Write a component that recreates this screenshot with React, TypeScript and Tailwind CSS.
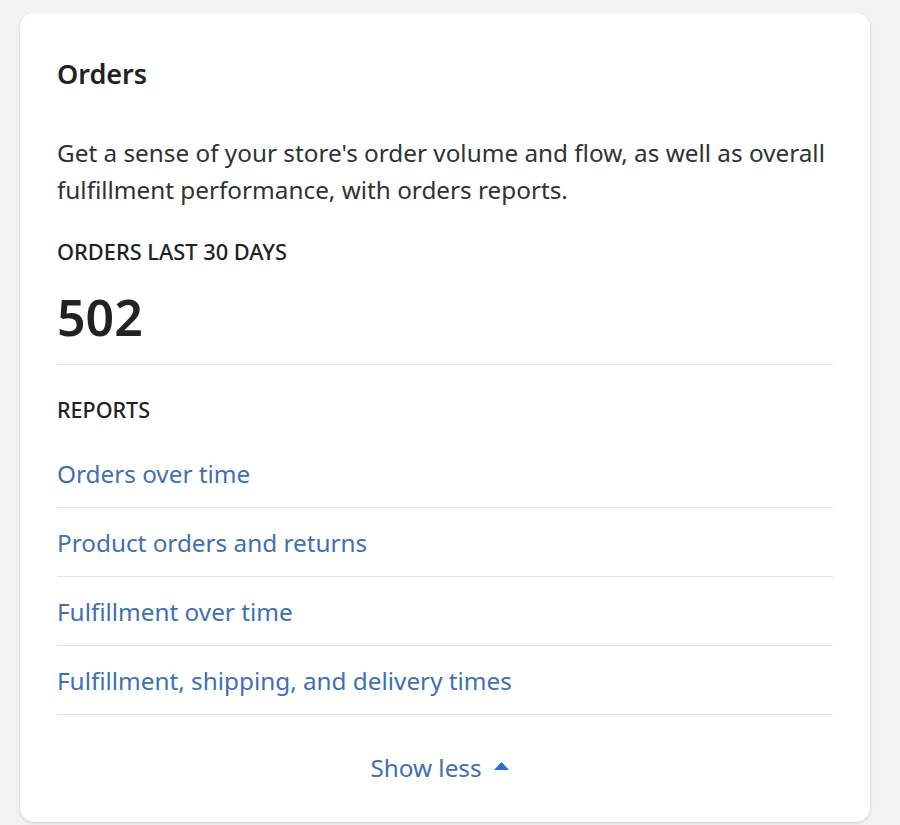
import React from "react";

const links = [
  "Orders over time",
  "Product orders and returns",
  "Fulfillment over time",
  "Fulfillment, shipping, and delivery times",
];

export default function App() {
  return (
    <div
      className="w-[900px] h-[825px] bg-[#f3f3f3] pt-[13px] pl-[20px] overflow-hidden"
      style={{ fontFamily: '"Noto Sans", "Open Sans", sans-serif' }}
    >
      <div className="w-[850px] h-[809px] bg-white rounded-[14px] shadow-[0_1px_3px_rgba(0,0,0,0.18)] px-[37px] pt-[45px] flex flex-col">
        <h2 className="text-[27px] leading-[32px] font-semibold text-[#202223]">Orders</h2>
        <p className="mt-[44px] text-[24.3px] leading-[37px] text-[#303233]">
          Get a sense of your store's order volume and flow, as well as overall fulfillment performance, with orders reports.
        </p>
        <div className="mt-[30px] text-[21.8px] leading-[28px] font-medium text-[#202223]">ORDERS LAST 30 DAYS</div>
        <div className="mt-[21px] text-[50px] leading-[60px] font-semibold text-[#202223]">502</div>
        <div className="mt-[17px] h-px bg-[#e3e3e3]" />
        <div className="mt-[31px] text-[21.5px] leading-[28px] font-medium text-[#202223]">REPORTS</div>
        <div className="mt-[15px] flex flex-col">
          {links.map((l) => (
            <div key={l} className="h-[69px] pt-[3px] flex items-center border-b border-[#e3e3e3] text-[24.3px] text-[#3f6fb4]">
              {l}
            </div>
          ))}
        </div>
        <div className="flex-1 pr-[11px] flex items-center justify-center gap-[12px] text-[24.3px] text-[#3f6fb4]">
          <span>Show less</span>
          <svg width="15" height="8" viewBox="0 0 15 8" className="mt-[-6px]">
            <path d="M7.5 0 L15 8 L0 8 Z" fill="#2c6ecb" />
          </svg>
        </div>
      </div>
    </div>
  );
}
